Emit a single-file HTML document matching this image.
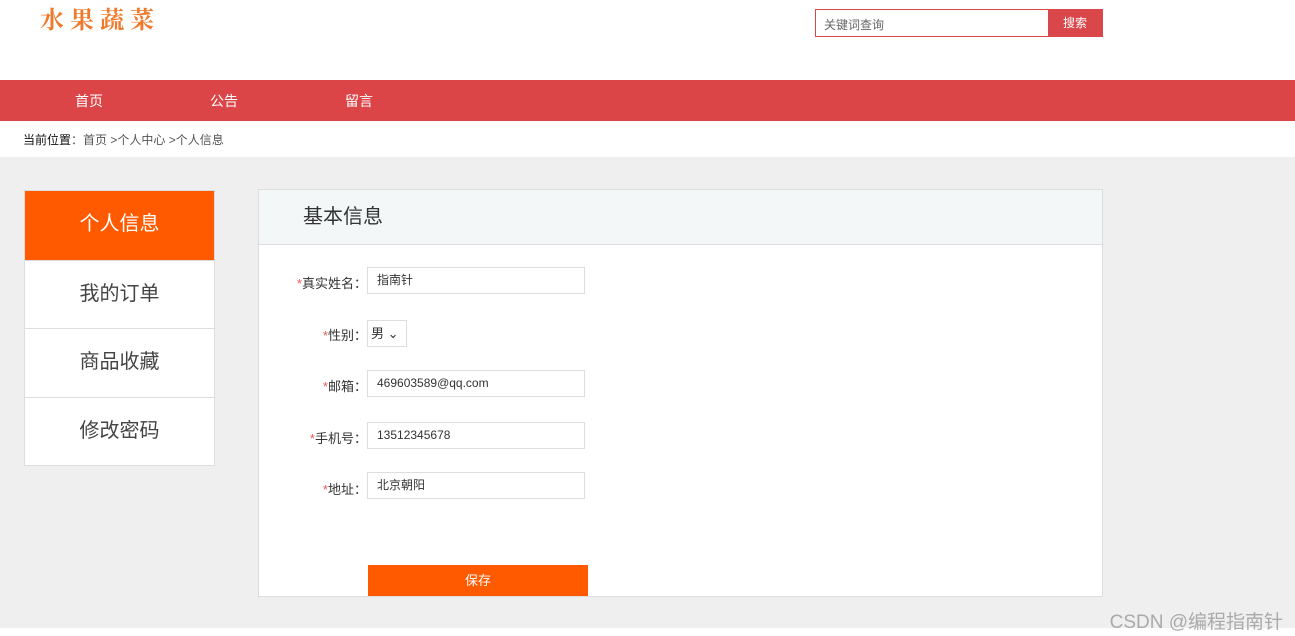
<!DOCTYPE html>
<html><head><meta charset="utf-8"><style>
*{margin:0;padding:0;box-sizing:border-box}
body{width:1295px;height:636px;background:#fff;font-family:"Liberation Sans","Noto Sans CJK SC",sans-serif;position:relative;overflow:hidden;color:#333}
.a{position:absolute}
.logo{left:40px;top:0px;font-family:"Noto Serif CJK SC",serif;font-size:24px;color:#f07a2c;letter-spacing:6px;font-weight:bold}
.search{left:815px;top:9px;width:288px;height:28px;border:1px solid #d9474b}
.search span{position:absolute;left:8px;top:6px;font-size:12px;color:#666}
.search b{position:absolute;right:0;top:0;width:54px;height:26px;background:#d9474b;color:#fff;font-size:12px;font-weight:normal;text-align:center;line-height:26px}
.nav{left:0;top:80px;width:1295px;height:41px;background:#db4547}
.nav span{position:absolute;top:11px;color:#fff;font-size:14px}
.crumb{left:23px;top:131px;font-size:12px;color:#555}
.gray{left:0;top:157px;width:1295px;height:471px;background:#efefef}
.side{left:24px;top:190px;width:191px;border:1px solid #ddd;background:#fff}
.side div{height:68.5px;border-top:1px solid #ddd;text-align:center;line-height:66px;font-size:20px;color:#444}
.side div.on{background:#ff5a00;color:#fff;border-top:none}
.main{left:258px;top:189px;width:845px;height:408px;background:#fff;border:1px solid #ddd}
.hd{height:55px;background:#f3f7f8;border-bottom:1px solid #ddd;font-size:20px;line-height:54px;padding-left:44px;color:#333}
.lab{font-size:13px;color:#333;text-align:right;width:108px;left:0}
.lab i{color:#e55;font-style:normal}
.inp{left:108px;width:218px;height:27px;border:1px solid #ddd;font-size:12px;padding-left:9px;line-height:25px;color:#333}
.btn{left:109px;top:375px;width:220px;height:31px;background:#ff5a00;color:#fff;font-size:13px;text-align:center;line-height:31px}
.csdn{right:12px;top:607px;font-size:19px;color:#aaa}
</style></head><body>
<div class="a logo">水果蔬菜</div>
<div class="a search"><span>关键词查询</span><b>搜索</b></div>
<div class="a nav"><span style="left:75px">首页</span><span style="left:210px">公告</span><span style="left:345px">留言</span></div>
<div class="a crumb"><span style="color:#111">当前位置</span>：首页 &gt;个人中心 &gt;个人信息</div>
<div class="a gray"></div>
<div class="a side"><div class="on">个人信息</div><div>我的订单</div><div>商品收藏</div><div>修改密码</div></div>
<div class="a main">
<div class="hd">基本信息</div>
<div class="a lab" style="top:83px"><i>*</i>真实姓名：</div><div class="a inp" style="top:77px">指南针</div>
<div class="a lab" style="top:135px"><i>*</i>性别：</div><div class="a inp" style="top:130px;width:40px;font-size:13px;padding-left:3px">男 ⌄</div>
<div class="a lab" style="top:186px"><i>*</i>邮箱：</div><div class="a inp" style="top:180px">469603589@qq.com</div>
<div class="a lab" style="top:238px"><i>*</i>手机号：</div><div class="a inp" style="top:232px">13512345678</div>
<div class="a lab" style="top:289px"><i>*</i>地址：</div><div class="a inp" style="top:282px">北京朝阳</div>
<div class="a btn">保存</div>
</div>
<div class="a csdn">CSDN @编程指南针</div>
</body></html>
